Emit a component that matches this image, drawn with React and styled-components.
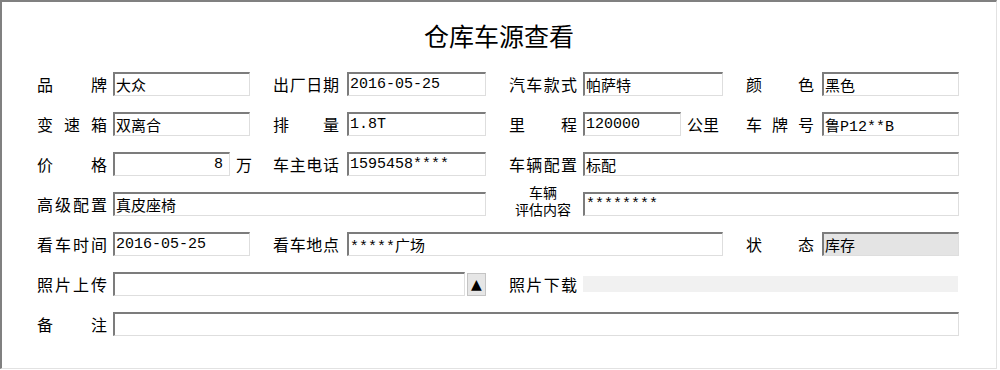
import styled, { createGlobalStyle } from 'styled-components';

const GlobalStyle = createGlobalStyle`
  html, body {
    margin: 0;
    padding: 0;
    background: #ffffff;
  }
  body {
    font-family: "Noto Sans CJK SC", "Liberation Sans", sans-serif;
    color: #000;
  }
`;

const Frame = styled.div`
  box-sizing: border-box;
  width: 997px;
  height: 369px;
  border-top: 2px solid #808080;
  border-left: 2px solid #808080;
  border-right: 1px solid #e2e2e2;
  border-bottom: 1px solid #e2e2e2;
  padding: 0 0 0 35px;
`;

const Title = styled.h1`
  margin: 0;
  padding: 16px 35px 0 0;
  height: 70px;
  box-sizing: border-box;
  text-align: center;
  font-size: 25px;
  font-weight: 400;
  line-height: 34px;
`;

const Grid = styled.div`
  display: grid;
  grid-template-columns: 213px 213px 214px 213px;
  grid-auto-rows: 24px;
  column-gap: 23px;
  row-gap: 16px;
`;

const Field = styled.div`
  display: flex;
  align-items: center;
  grid-column: span ${(p) => p.$span || 1};
  gap: ${(p) => p.$gap || 6}px;
`;

const Label = styled.div`
  flex: 0 0 ${(p) => p.$w || 70}px;
  display: flex;
  justify-content: ${(p) => (p.$stack ? 'center' : 'space-between')};
  flex-direction: ${(p) => (p.$stack ? 'column' : 'row')};
  align-items: center;
  font-size: ${(p) => (p.$stack ? 14 : 16)}px;
  line-height: ${(p) => (p.$stack ? '17px' : '24px')};
  margin-top: ${(p) => (p.$stack ? -6 : 0)}px;
  white-space: nowrap;
`;

const Box = styled.input`
  box-sizing: border-box;
  flex: ${(p) => (p.$w ? `0 0 ${p.$w}px` : '1 1 auto')};
  min-width: 0;
  height: 24px;
  margin: 0;
  padding: 0 ${(p) => (p.$right ? 6 : 1)}px 0 1px;
  border-top: 2px solid #7c7c7c;
  border-left: 2px solid #7c7c7c;
  border-right: 1px solid #dedede;
  border-bottom: 1px solid #dedede;
  background: ${(p) => (p.$gray ? '#e4e4e4' : '#fff')};
  font-family: "Liberation Mono", "Noto Sans CJK SC", monospace;
  font-size: 15px;
  color: #000;
  text-align: ${(p) => (p.$right ? 'right' : 'left')};
  outline: none;
`;

const Unit = styled.span`
  font-size: 16px;
  line-height: 24px;
  white-space: nowrap;
`;

const UpButton = styled.button`
  flex: 0 0 19px;
  height: 23px;
  margin: 0 0 0 -4px;
  padding: 0;
  border: 1px solid #c4c4c4;
  background: #e6e6e6;
  display: flex;
  align-items: center;
  justify-content: center;
  font-size: 14px;
  color: #000;
  font-family: "DejaVu Sans", sans-serif;
`;

const DownloadArea = styled.div`
  flex: 0 0 375px;
  height: 16px;
  background: #f1f1f1;
`;

const JLabel = ({ text, w }) => (
  <Label $w={w}>
    {text.split('').map((c, i) => (
      <span key={i}>{c}</span>
    ))}
  </Label>
);

const App = () => (
  <>
    <GlobalStyle />
    <Frame>
      <Title>仓库车源查看</Title>
      <Grid>
        <Field>
          <JLabel text="品牌" />
          <Box readOnly value="大众" />
        </Field>
        <Field $gap={8}>
          <JLabel text="出厂日期" w={66} />
          <Box readOnly value="2016-05-25" />
        </Field>
        <Field>
          <JLabel text="汽车款式" w={68} />
          <Box readOnly value="帕萨特" />
        </Field>
        <Field $gap={8}>
          <JLabel text="颜色" w={68} />
          <Box readOnly value="黑色" />
        </Field>

        <Field>
          <JLabel text="变速箱" />
          <Box readOnly value="双离合" />
        </Field>
        <Field $gap={8}>
          <JLabel text="排量" w={66} />
          <Box readOnly value="1.8T" />
        </Field>
        <Field>
          <JLabel text="里程" w={68} />
          <Box readOnly value="120000" $w={98} />
          <Unit>公里</Unit>
        </Field>
        <Field $gap={8}>
          <JLabel text="车牌号" w={68} />
          <Box readOnly value="鲁P12**B" />
        </Field>

        <Field>
          <JLabel text="价格" />
          <Box readOnly value="8" $right $w={117} />
          <Unit>万</Unit>
        </Field>
        <Field $gap={8}>
          <JLabel text="车主电话" w={66} />
          <Box readOnly value="1595458****" />
        </Field>
        <Field $span={2}>
          <JLabel text="车辆配置" w={68} />
          <Box readOnly value="标配" />
        </Field>

        <Field $span={2}>
          <JLabel text="高级配置" />
          <Box readOnly value="真皮座椅" />
        </Field>
        <Field $span={2}>
          <Label $w={68} $stack>
            <span>车辆</span>
            <span>评估内容</span>
          </Label>
          <Box readOnly value="********" />
        </Field>

        <Field>
          <JLabel text="看车时间" />
          <Box readOnly value="2016-05-25" />
        </Field>
        <Field $span={2} $gap={8}>
          <JLabel text="看车地点" w={66} />
          <Box readOnly value="*****广场" />
        </Field>
        <Field $gap={8}>
          <JLabel text="状态" w={68} />
          <Box readOnly value="库存" $gray />
        </Field>

        <Field $span={2}>
          <JLabel text="照片上传" />
          <Box readOnly value="" />
          <UpButton>▲</UpButton>
        </Field>
        <Field $span={2}>
          <JLabel text="照片下载" w={68} />
          <DownloadArea />
        </Field>

        <Field $span={4}>
          <JLabel text="备注" />
          <Box readOnly value="" />
        </Field>
      </Grid>
    </Frame>
  </>
);

export default App;
